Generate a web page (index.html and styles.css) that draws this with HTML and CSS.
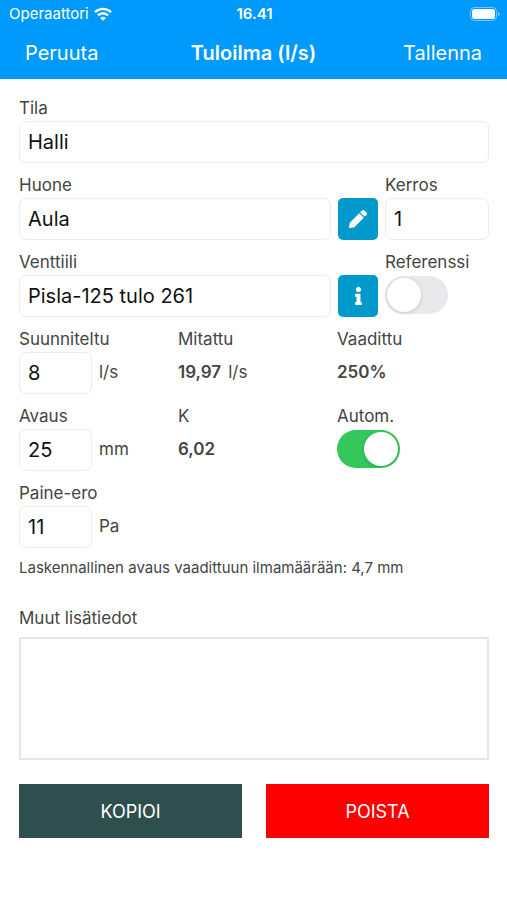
FILE: index.html
```html
<!DOCTYPE html>
<html lang="fi">
  <head>
    <meta charset="UTF-8" />
    <meta name="viewport" content="width=device-width, initial-scale=1.0" />
    <title>Tuloilma (l/s)</title>
    <link rel="stylesheet" href="styles.css">
  </head>
  <body>
    <header>
      <div class="status">
        <span class="carrier">
          Operaattori
          <svg width="18" height="14" viewBox="0 0 18 14" fill="none" stroke="#fff" stroke-width="2.4">
            <path d="M1 5.2a11.4 11.4 0 0 1 16 0" />
            <path d="M4 8.4a7.1 7.1 0 0 1 10 0" />
            <path d="M9 13.8L6.2 11a4 4 0 0 1 5.6 0z" fill="#fff" stroke="none" />
          </svg>
        </span>
        <span class="clock">16.41</span>
        <svg class="battery" width="30" height="14" viewBox="0 0 30 14">
          <rect x="0.5" y="0.5" width="26" height="13" rx="4" fill="none" stroke="#fff" stroke-opacity="0.45" />
          <rect x="2" y="2" width="23" height="10" rx="2.5" fill="#fff" />
          <path d="M28 5v4q1.700-.6 1.700-2T28 5z" fill="#fff" fill-opacity="0.5" />
        </svg>
      </div>
      <nav class="navbar">
        <button type="button">Peruuta</button>
        <h1>Tuloilma (l/s)</h1>
        <button type="button">Tallenna</button>
      </nav>
    </header>

    <form>
      <div class="field">
        <label for="tila">Tila</label>
        <input type="text" id="tila" value="Halli" />
      </div>

      <div class="row room">
        <div class="field">
          <label for="huone">Huone</label>
          <input type="text" id="huone" value="Aula" />
        </div>
        <button type="button" class="icon" aria-label="Muokkaa">
          <svg width="18" height="18" viewBox="0 0 512 512" fill="#fff">
            <path d="M498 142l-46 46c-5 5-12 5-17 0L324 77c-5-5-5-12 0-17l46-46c19-19 49-19 68 0l60 60c19 19 19 49 0 68zM284 100L22 362 1 484c-3 16 12 30 28 28l122-22 262-262c5-5 5-12 0-17L301 100c-5-5-12-5-17 0z" />
          </svg>
        </button>
        <div class="field">
          <label for="kerros">Kerros</label>
          <input type="text" id="kerros" value="1" />
        </div>
      </div>

      <div class="row room">
        <div class="field">
          <label for="venttiili">Venttiili</label>
          <input type="text" id="venttiili" value="Pisla-125 tulo 261" />
        </div>
        <button type="button" class="icon" aria-label="Tiedot">
          <svg width="7" height="18" viewBox="0 0 192 512" fill="#fff">
            <path d="M20 424h20V280H20c-11 0-20-9-20-20v-48c0-11 9-20 20-20h112c11 0 20 9 20 20v212h20c11 0 20 9 20 20v48c0 11-9 20-20 20H20c-11 0-20-9-20-20v-48c0-11 9-20 20-20zM96 0a72 72 0 1 0 0 144A72 72 0 1 0 96 0z" />
          </svg>
        </button>
        <div class="field">
          <label for="referenssi">Referenssi</label>
          <input type="checkbox" class="switch" id="referenssi" />
        </div>
      </div>

      <div class="row thirds">
        <div class="field">
          <label for="suunniteltu">Suunniteltu</label>
          <div class="value">
            <input type="text" class="short" id="suunniteltu" value="8" /> <span>l/s</span>
          </div>
        </div>
        <div class="field">
          <span class="label">Mitattu</span>
          <div class="value"><b>19,97</b> <span>l/s</span></div>
        </div>
        <div class="field">
          <span class="label">Vaadittu</span>
          <div class="value"><b>250%</b></div>
        </div>
      </div>

      <div class="row thirds">
        <div class="field">
          <label for="avaus">Avaus</label>
          <div class="value">
            <input type="text" class="short" id="avaus" value="25" /> <span>mm</span>
          </div>
        </div>
        <div class="field">
          <span class="label">K</span>
          <div class="value"><b>6,02</b></div>
        </div>
        <div class="field">
          <label for="autom">Autom.</label>
          <input type="checkbox" class="switch" id="autom" checked />
        </div>
      </div>

      <div class="field">
        <label for="paine">Paine-ero</label>
        <div class="value">
          <input type="text" class="short" id="paine" value="11" /> <span>Pa</span>
        </div>
      </div>

      <p>Laskennallinen avaus vaadittuun ilmamäärään: 4,7 mm</p>

      <div class="field notes">
        <label for="lisatiedot">Muut lisätiedot</label>
        <textarea id="lisatiedot"></textarea>
      </div>

      <div class="actions">
        <button type="button" class="copy">KOPIOI</button>
        <button type="button" class="delete">POISTA</button>
      </div>
    </form>
  </body>
</html>
```
FILE: styles.css
```css
* {
  box-sizing: border-box;
}

body {
  margin: 0;
  background-color: #fff;
  color: #444;
  font-family: Inter, "Liberation Sans", sans-serif;
  font-size: 17px;
}

button {
  border: 0;
  padding: 0;
  background: none;
  color: white;
  font: inherit;
  cursor: pointer;
}

header {
  background-color: #0099fc;
  color: white;
}

.status {
  display: grid;
  grid-template-columns: 1fr auto 1fr;
  align-items: center;
  height: 27px;
  padding: 0 7px 0 9px;
  font-size: 15px;
}

.carrier {
  display: flex;
  align-items: center;
  gap: 5px;
}

.clock {
  font-weight: 600;
}

.battery {
  justify-self: end;
}

.navbar {
  display: grid;
  grid-template-columns: 1fr auto 1fr;
  align-items: center;
  height: 52px;
  padding: 0 25px;
  font-size: 20px;
}

.navbar button {
  justify-self: start;
}

.navbar button:last-child {
  justify-self: end;
}

h1 {
  margin: 0;
  font-size: 20px;
  font-weight: 600;
}

form {
  display: flex;
  flex-direction: column;
  gap: 9px;
  padding: 16px 18px 0 19px;
}

.row {
  display: grid;
  gap: 7px;
  align-items: end;
}

.room {
  grid-template-columns: 1fr 40px 104px;
}

.thirds {
  grid-template-columns: repeat(3, 1fr);
}

.field {
  display: flex;
  flex-direction: column;
}

label,
.label {
  line-height: 26px;
}

input[type="text"] {
  width: 100%;
  height: 42px;
  padding: 0 8px;
  border: 1px solid #ececec;
  border-radius: 7px;
  background-color: #fff;
  color: #111;
  font: inherit;
  font-size: 20px;
}

input[type="text"].short {
  width: 73px;
}

.value {
  display: flex;
  align-items: center;
  gap: 7px;
  height: 42px;
}

.value span,
.value b {
  padding-bottom: 2px;
}

b {
  font-weight: 600;
}

.icon {
  display: flex;
  align-items: center;
  justify-content: center;
  height: 42px;
  border-radius: 5px;
  background-color: #0099cc;
}

.switch {
  appearance: none;
  display: flex;
  width: 63px;
  height: 38px;
  margin: 1px 0 3px;
  padding: 2px;
  border-radius: 19px;
  background-color: #e9e9eb;
  cursor: pointer;
}

.switch::before {
  content: "";
  width: 34px;
  height: 34px;
  border-radius: 50%;
  background-color: #fff;
  box-shadow: 0 1px 4px rgba(0, 0, 0, 0.15);
}

.switch:checked {
  justify-content: flex-end;
  background-color: #34c759;
}

p {
  margin: 0;
  font-size: 15px;
  line-height: 22px;
}

.notes {
  gap: 6px;
  margin-top: 17px;
}

textarea {
  display: block;
  width: 100%;
  height: 123px;
  padding: 8px;
  border: 2px solid #e5e5e5;
  border-radius: 0;
  font: inherit;
  resize: none;
}

.actions {
  display: grid;
  grid-template-columns: 1fr 1fr;
  gap: 24px;
  margin-top: 15px;
}

.actions button {
  height: 54px;
  font-size: 18px;
}

.copy {
  background-color: #2f4f4f;
}

.delete {
  background-color: #ff0000;
}
```
